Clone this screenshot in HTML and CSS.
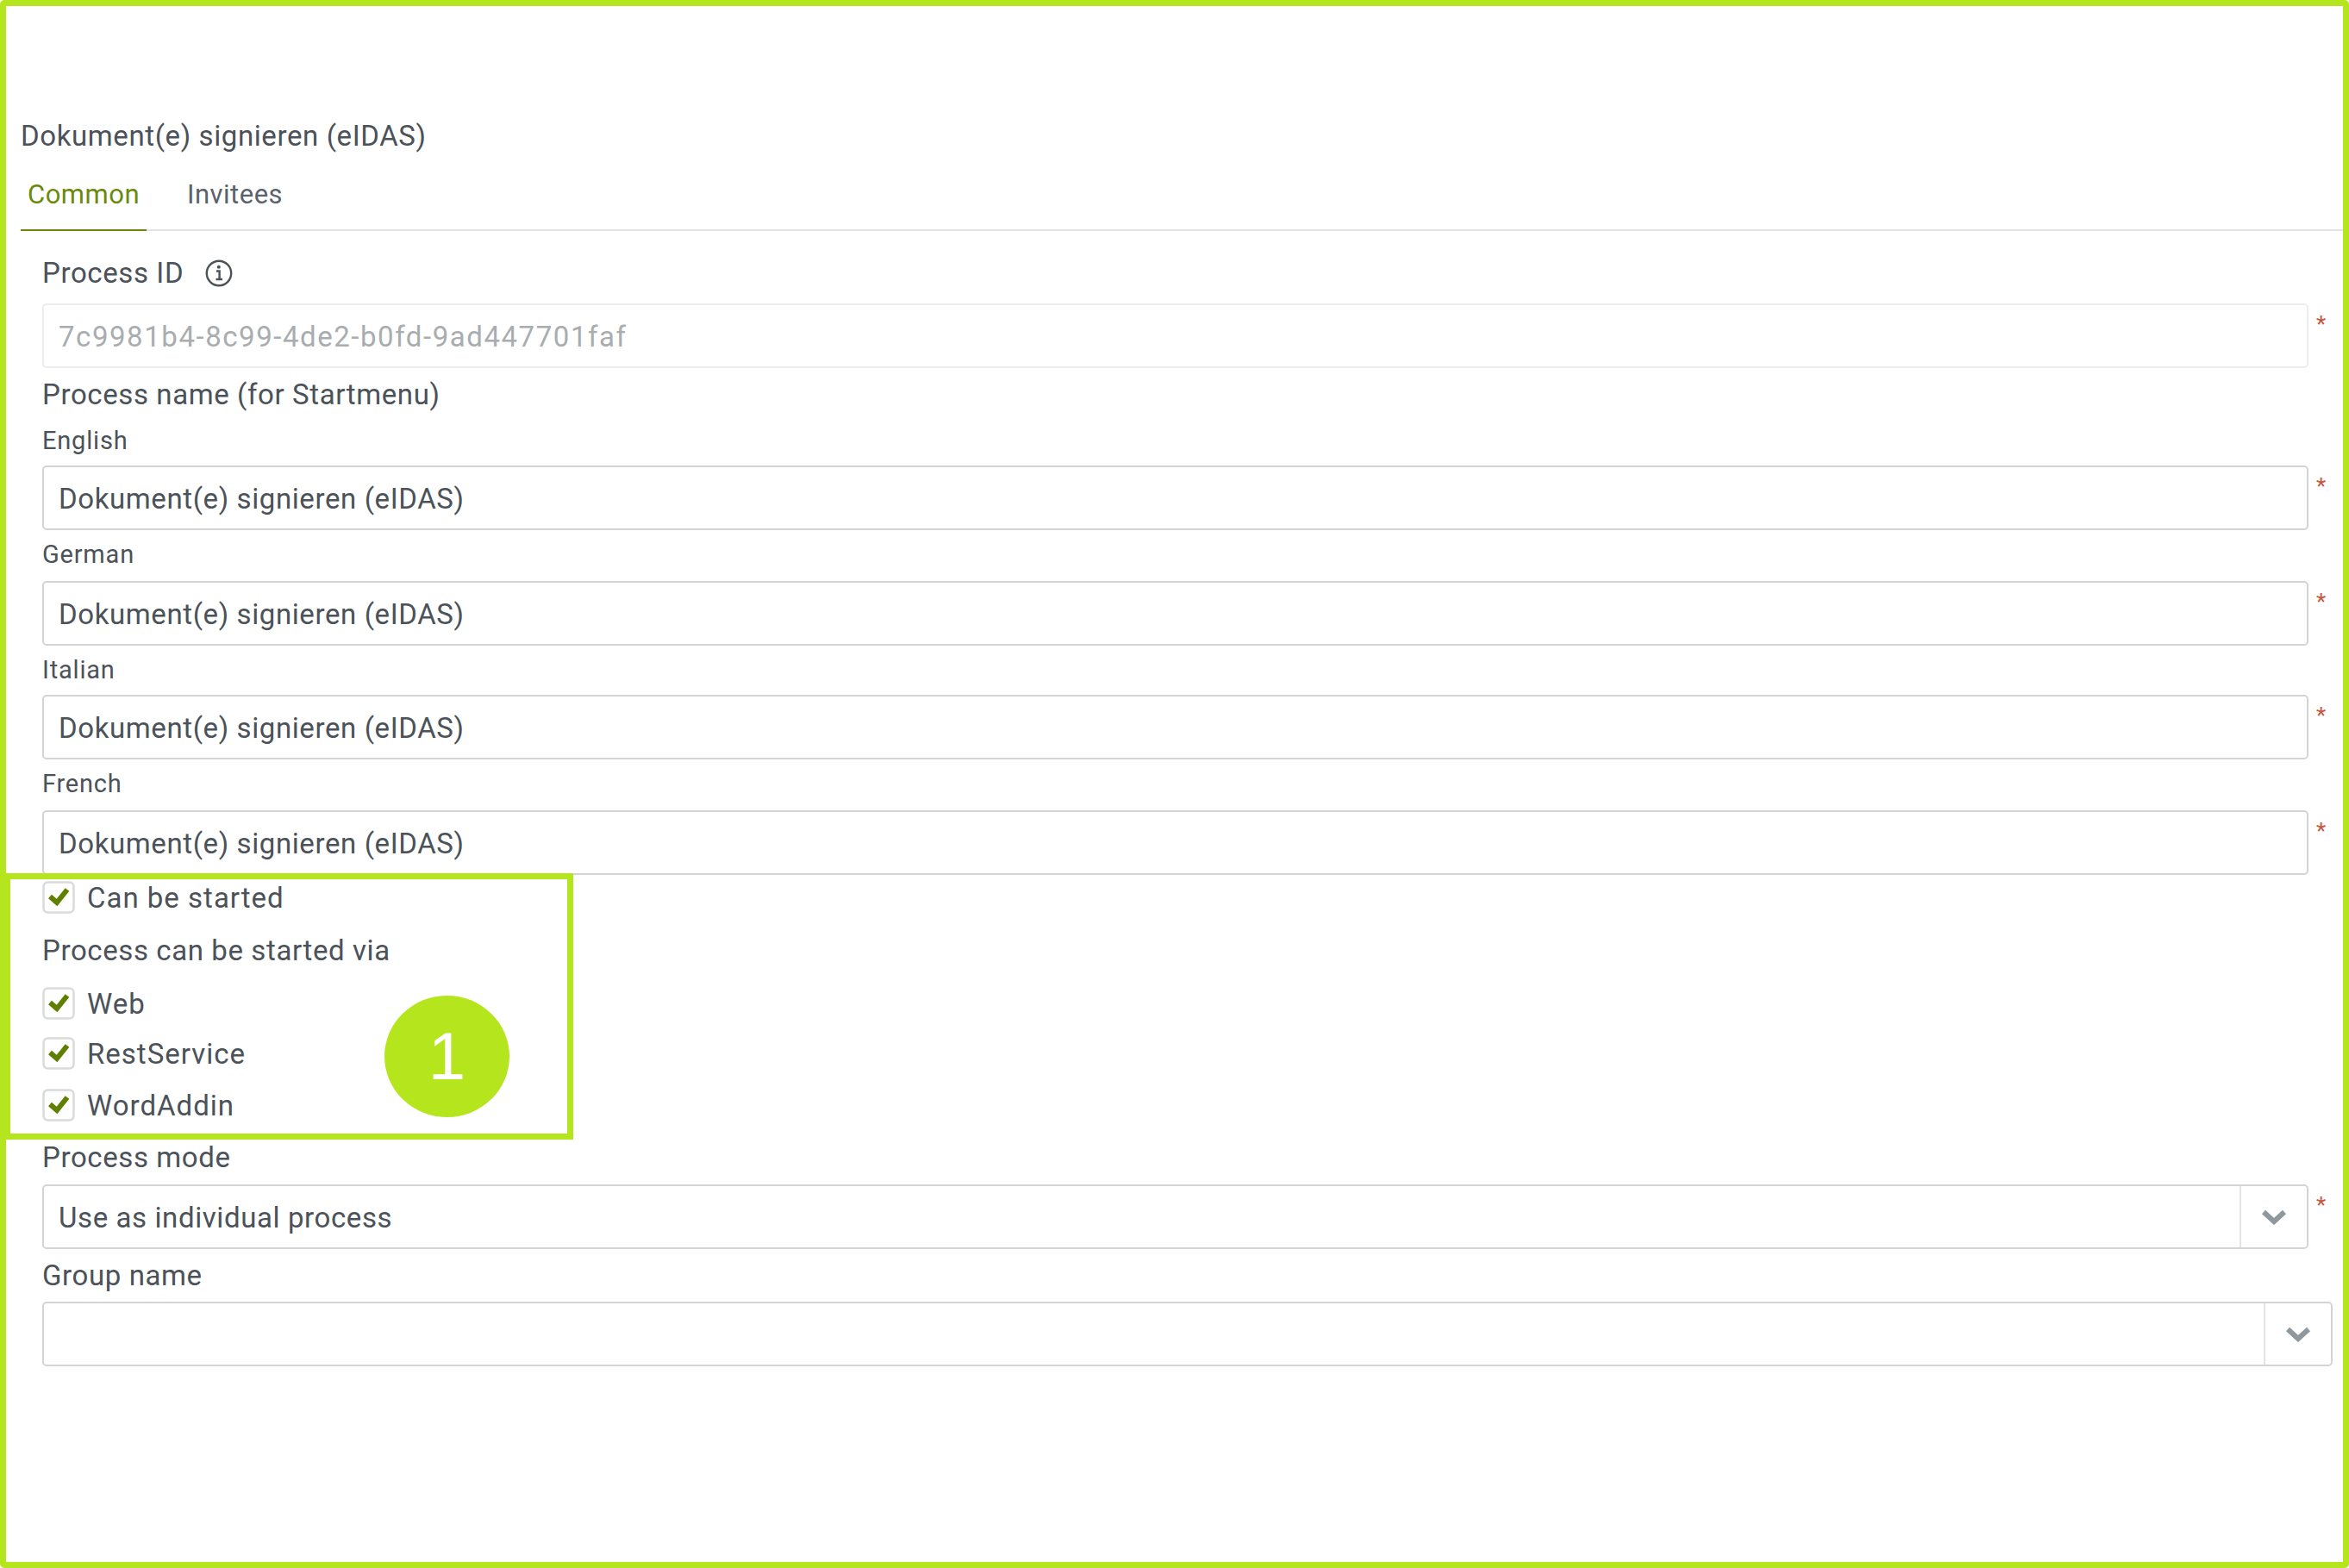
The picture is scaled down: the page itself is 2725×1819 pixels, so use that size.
FILE: index.html
```html
<!DOCTYPE html>
<html lang="en">
<head>
	<meta charset="UTF-8">
	<title>Dokument(e) signieren (eIDAS)</title>
	<link rel="stylesheet" href="styles.css">
</head>
<body>
<div id="wrapper">
	<h1 class="title">Dokument(e) signieren (eIDAS)</h1>
	<ul class="tabs">
		<li class="tab current">Common</li>
		<li class="tab">Invitees</li>
	</ul>
	<div class="form">
		<div class="label label-id">
			<span>Process ID</span>
			<svg class="icon-info" viewBox="0 0 32 32"><circle cx="16" cy="16" r="14.2"/><path d="M13 13.5h3.6v9.5M12.5 23h7.5"/><circle class="dot" cx="15.8" cy="8.8" r="2"/></svg>
		</div>
		<div class="row">
			<div class="input disabled">7c9981b4-8c99-4de2-b0fd-9ad447701faf</div>
			<span class="star">*</span>
		</div>
		<div class="label label-name">Process name (for Startmenu)</div>
		<div class="sub-label first">English</div>
		<div class="row">
			<div class="input">Dokument(e) signieren (eIDAS)</div>
			<span class="star">*</span>
		</div>
		<div class="sub-label">German</div>
		<div class="row">
			<div class="input">Dokument(e) signieren (eIDAS)</div>
			<span class="star">*</span>
		</div>
		<div class="sub-label short">Italian</div>
		<div class="row">
			<div class="input">Dokument(e) signieren (eIDAS)</div>
			<span class="star">*</span>
		</div>
		<div class="sub-label">French</div>
		<div class="row">
			<div class="input">Dokument(e) signieren (eIDAS)</div>
			<span class="star">*</span>
		</div>
		<label class="check check-start">
			<svg class="box" viewBox="0 0 38 38"><rect x="1.5" y="1.5" width="35" height="35" rx="5"/><path d="M9 18l8 7L29 10"/></svg>
			<span>Can be started</span>
		</label>
		<div class="label label-via">Process can be started via</div>
		<label class="check check-web">
			<svg class="box" viewBox="0 0 38 38"><rect x="1.5" y="1.5" width="35" height="35" rx="5"/><path d="M9 18l8 7L29 10"/></svg>
			<span>Web</span>
		</label>
		<label class="check check-rest">
			<svg class="box" viewBox="0 0 38 38"><rect x="1.5" y="1.5" width="35" height="35" rx="5"/><path d="M9 18l8 7L29 10"/></svg>
			<span>RestService</span>
		</label>
		<label class="check check-word">
			<svg class="box" viewBox="0 0 38 38"><rect x="1.5" y="1.5" width="35" height="35" rx="5"/><path d="M9 18l8 7L29 10"/></svg>
			<span>WordAddin</span>
		</label>
		<div class="label label-mode">Process mode</div>
		<div class="row">
			<div class="input select">
				<span class="select-text">Use as individual process</span>
				<span class="select-btn"><svg class="icon-down" viewBox="0 0 30 18"><path d="M3 3l12 11L27 3"/></svg></span>
			</div>
			<span class="star">*</span>
		</div>
		<div class="label label-group">Group name</div>
		<div class="row">
			<div class="input select">
				<span class="select-text"></span>
				<span class="select-btn"><svg class="icon-down" viewBox="0 0 30 18"><path d="M3 3l12 11L27 3"/></svg></span>
			</div>
		</div>
	</div>
	<!-- annotation on top of the screenshot -->
	<div class="mark-box"></div>
	<div class="mark-num">1</div>
</div>
</body>
</html>
```
FILE: styles.css
```css
body,div,ul,li,h1{
    margin: 0;
    padding: 0;
}
ul{
    list-style: none;
}
body{
    font-family: Roboto, "Liberation Sans", sans-serif;
    font-size: 33px;
    letter-spacing: 0.6px;
    color: #4b5259;
    background: #fff;
}
#wrapper{
    position: relative;
    box-sizing: border-box;
    height: 1819px;
    padding-top: 131px;
    border: 7px solid #b5e61d;
    border-radius: 5px;
    overflow: hidden;
}
.title{
    margin-left: 17px;
    font-size: 33px;
    font-weight: 400;
    line-height: 40px;
}
.tabs{
    display: flex;
    margin: 28px 0 0 17px;
    height: 60px;
    border-bottom: 2px solid #e1e4e4;
}
.tab{
    height: 60px;
    padding: 0 0 0 8px;
    line-height: 40px;
    font-size: 31px;
    letter-spacing: 0.5px;
    color: #5a626a;
}
.tab + .tab{
    margin-left: 47px;
    padding: 0;
}
.tab.current{
    width: 138px;
    color: #6a8a0c;
    border-bottom: 2px solid #6a8a0c;
}
.form{
    margin: 29px 12px 0 42px;
}
.label{
    line-height: 40px;
}
.label-id{
    display: flex;
    align-items: center;
    margin-bottom: 15px;
}
.icon-info{
    width: 32px;
    height: 32px;
    margin-left: 25px;
    fill: none;
    stroke: #4b5259;
    stroke-width: 2.4;
}
.icon-info .dot{
    fill: #4b5259;
    stroke: none;
}
.label-name{
    margin-top: 11px;
}
.sub-label{
    font-size: 29px;
    letter-spacing: 0.8px;
    line-height: 30px;
    margin: 13px 0 16px;
}
.sub-label.first{
    margin: 18px 0 14px;
}
.sub-label.short{
    margin-bottom: 14px;
}
.row{
    display: flex;
}
.input{
    flex: 1;
    box-sizing: border-box;
    height: 75px;
    padding-left: 17px;
    line-height: 73px;
    border: 2.5px solid #d3d4d4;
    border-radius: 5px;
}
.input.disabled{
    border-color: #ebecec;
    color: #a8adb0;
    letter-spacing: 1.55px;
}
.star{
    width: 28px;
    text-align: center;
    padding-left: 2px;
    box-sizing: border-box;
    font-size: 26px;
    line-height: 48px;
    color: #c8553d;
}
.check{
    display: flex;
    align-items: center;
    height: 38px;
    letter-spacing: 1px;
}
.check .box{
    width: 38px;
    height: 38px;
    margin-right: 14px;
}
.box rect{
    fill: #fff;
    stroke: #d9dada;
    stroke-width: 2.5;
}
.box path{
    fill: none;
    stroke: #5f7f00;
    stroke-width: 6;
}
.check-start{
    margin-top: 7px;
}
.label-via{
    margin-top: 23px;
}
.check-web{
    margin-top: 22px;
}
.check-rest{
    margin-top: 20px;
}
.check-word{
    margin-top: 22px;
}
.label-mode{
    margin-top: 22px;
    margin-bottom: 11px;
}
.label-group{
    margin-top: 11px;
    margin-bottom: 10px;
}
.select{
    display: flex;
    padding-left: 17px;
}
.select-text{
    flex: 1;
}
.select-btn{
    display: flex;
    align-items: center;
    justify-content: center;
    width: 76px;
    border-left: 2.5px solid #e3e4e4;
}
.icon-down{
    width: 30px;
    height: 18px;
    fill: none;
    stroke: #8f989f;
    stroke-width: 6;
}
.mark-box{
    position: absolute;
    left: -2px;
    top: 1006px;
    width: 660px;
    height: 309px;
    box-sizing: border-box;
    border: 7px solid #b5e61d;
}
.mark-num{
    position: absolute;
    left: 439px;
    top: 1148px;
    width: 145px;
    height: 141px;
    border-radius: 50%;
    background: #b5e61d;
    color: #fff;
    font-family: "Liberation Sans", Arial, sans-serif;
    font-size: 78px;
    letter-spacing: 0;
    line-height: 141px;
    text-align: center;
}
```
